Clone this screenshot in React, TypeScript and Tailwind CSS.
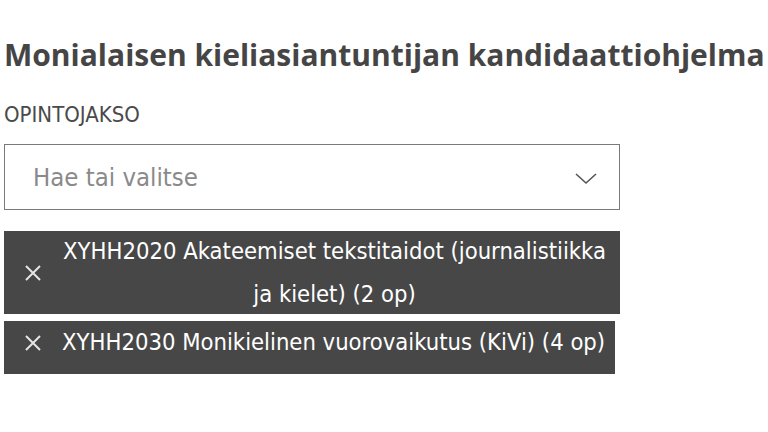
import React from 'react';

const narrow = { fontFamily: '"DejaVu Sans Condensed", "Liberation Sans", sans-serif' };

function Chip({ text, lines }: { text: string; lines: 1 | 2 }) {
  return (
    <div
      className={`flex items-center bg-[#474747] text-white max-w-[616px] ${
        lines === 2 ? 'h-[83px]' : 'h-[53px] pb-[10px]'
      }`}
    >
      <button className="shrink-0 w-[58px] pl-[20px] flex items-center">
        <svg width="18" height="18" viewBox="0 0 18 18" fill="none">
          <path d="M2 2L16 16M16 2L2 16" stroke="#e5e5e5" strokeWidth="2" />
        </svg>
      </button>
      <span
        className={`text-[23.6px] leading-[43px] text-center pr-[10px] ${lines === 2 ? '-ml-[3px]' : ''}`}
        style={narrow}
      >
        {text}
      </span>
    </div>
  );
}

export default function App() {
  return (
    <div className="w-[768px] h-[432px] bg-white overflow-hidden pl-[4px] pt-[37px]">
      <h1
        className="text-[30px] leading-[36px] font-bold text-[#454545] whitespace-nowrap"
        style={{ fontFamily: '"Open Sans", sans-serif' }}
      >
        Monialaisen kieliasiantuntijan kandidaattiohjelma
      </h1>

      <label className="block mt-[30px] text-[22px] leading-[24px] text-[#4a4a4a]" style={narrow}>
        OPINTOJAKSO
      </label>

      <div className="mt-[17px] w-[616px] h-[66px] border border-[#7a7a7a] flex items-center justify-between pl-[28px] pr-[22px]">
        <span className="text-[25.5px] text-[#8a8a8a]" style={narrow}>
          Hae tai valitse
        </span>
        <svg width="22" height="12" viewBox="0 0 22 12" fill="none" className="mt-[4px]">
          <path d="M1 1L11 10L21 1" stroke="#555" strokeWidth="1.6" />
        </svg>
      </div>

      <div className="mt-[21px] flex flex-col items-start gap-[7px]">
        <Chip lines={2} text="XYHH2020 Akateemiset tekstitaidot (journalistiikka ja kielet) (2 op)" />
        <Chip lines={1} text="XYHH2030 Monikielinen vuorovaikutus (KiVi) (4 op)" />
      </div>
    </div>
  );
}
